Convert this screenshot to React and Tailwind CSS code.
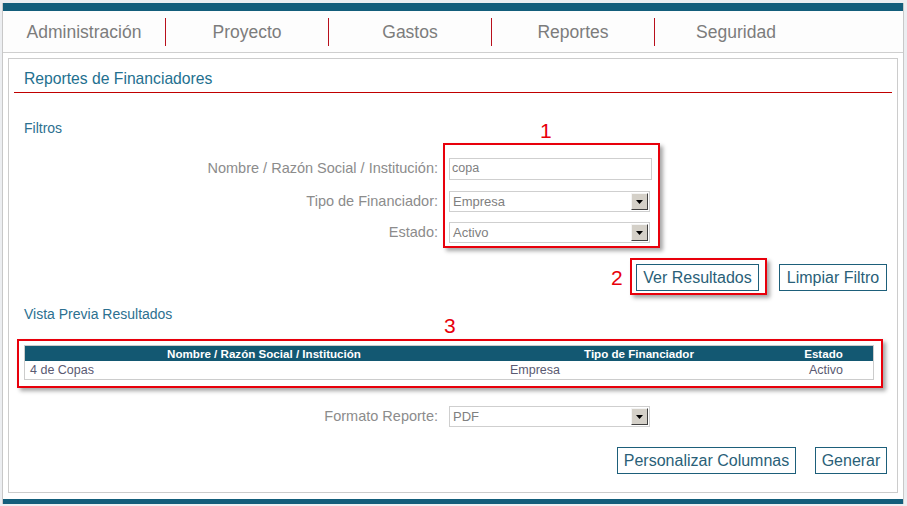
import React from "react";

const navItems = ["Administración", "Proyecto", "Gastos", "Reportes", "Seguridad"];

function Select({ value, width = "w-[201px]" }) {
  return (
    <div className={`${width} h-[21px] border border-[#cfcfcf] bg-white flex items-center justify-between pl-[3px] pr-[1px]`}>
      <span className="text-[13px] text-[#808080] leading-none">{value}</span>
      <div className="w-[17px] h-[17px] bg-[#d4d0c8] border-t border-l border-t-[#f4f4f4] border-l-[#f4f4f4] border-b border-r border-b-[#404040] border-r-[#404040] flex items-center justify-center">
        <svg width="7" height="4" viewBox="0 0 7 4"><path d="M0 0H7L3.5 4Z" fill="#000" /></svg>
      </div>
    </div>
  );
}

function Btn({ children, w }) {
  return (
    <div className={`${w} h-[27px] border border-[#1d5f7a] bg-white flex items-center justify-center text-[16px] text-[#2a5f78] leading-none`}>
      {children}
    </div>
  );
}

function Label({ children }) {
  return (
    <div className="w-[429px] text-right text-[14.5px] text-[#8c8c8c] leading-none">{children}</div>
  );
}

const annot = "absolute border-2 border-[#e8000b] shadow-[3px_3px_4px_rgba(0,0,0,0.35)]";
const num = "absolute text-[21px] leading-[21px] text-[#e8000b]";

export default function App() {
  return (
    <div className="w-[907px] h-[506px] bg-[#eceef1] font-['Liberation_Sans',Arial,sans-serif] overflow-hidden">
      <div className="ml-[2px] mt-[3px] w-[902px] h-[501px] border-x border-[#c8c8c8] bg-white flex flex-col">
        <div className="h-[8px] bg-[#135e7b]" />
        <div className="h-[42px] border-b border-[#cfcfcf] bg-[#fdfdfd] flex items-center pt-[1px]">
          {navItems.map((t, i) => (
            <React.Fragment key={t}>
              <div className="w-[162px] text-center text-[17.5px] text-[#7c7c7c] leading-none pt-[1px]">{t}</div>
              {i < 4 && <div className="w-px h-[28px] bg-[#b8101c]" />}
            </React.Fragment>
          ))}
        </div>
        <div className="relative mt-[5px] mx-[5px] h-[435px] border border-[#cccccc] bg-white flex flex-col">
          <div className="mx-[5px] pl-[10px] pt-[11px] pb-[4px] border-b border-[#c00000]">
            <div className="text-[15.7px] leading-[18px] text-[#23708f]">Reportes de Financiadores</div>
          </div>
          <div className="pl-[15px] mt-[27px] text-[14px] leading-[16px] text-[#2c7090]">Filtros</div>

          <div className="mt-[22px] flex flex-col">
            <div className="flex items-center h-[21px]">
              <Label>Nombre / Razón Social / Institución:</Label>
              <div className="ml-[11px] w-[203px] h-[22px] border border-[#cfcfcf] bg-white flex items-center pl-[2px]">
                <span className="text-[12.5px] text-[#808080] leading-none">copa</span>
              </div>
            </div>
            <div className="flex items-center h-[21px] mt-[12px]">
              <Label>Tipo de Financiador:</Label>
              <div className="ml-[11px]"><Select value="Empresa" /></div>
            </div>
            <div className="flex items-center h-[21px] mt-[10px]">
              <Label>Estado:</Label>
              <div className="ml-[11px]"><Select value="Activo" /></div>
            </div>
          </div>

          <div className="mt-[21px] flex justify-end pr-[10px] gap-[20px]">
            <Btn w="w-[123px]">Ver Resultados</Btn>
            <Btn w="w-[108px]">Limpiar Filtro</Btn>
          </div>

          <div className="pl-[15px] mt-[15px] text-[14px] leading-[16px] text-[#2c7090]">Vista Previa Resultados</div>

          <div className="ml-[15px] mt-[23px] w-[850px] border border-[#cccccc]">
            <div className="h-[15px] bg-[#135872] flex items-center text-[11.6px] font-bold text-white leading-none">
              <div className="w-[478px] text-center">Nombre / Razón Social / Institución</div>
              <div className="w-[272px] text-center">Tipo de Financiador</div>
              <div className="w-[97px] text-center">Estado</div>
            </div>
            <div className="h-[18px] flex items-center text-[12.5px] text-[#5a5a72] leading-none">
              <div className="w-[265px] pl-[5px]">4 de Copas</div>
              <div className="w-[490px] text-center">Empresa</div>
              <div className="w-[92px] text-center">Activo</div>
            </div>
          </div>

          <div className="mt-[26px] flex items-center h-[21px]">
            <Label>Formato Reporte:</Label>
            <div className="ml-[11px]"><Select value="PDF" /></div>
          </div>

          <div className="mt-[20px] flex justify-end pr-[10px] gap-[19px]">
            <Btn w="w-[179px]">Personalizar Columnas</Btn>
            <Btn w="w-[72px]">Generar</Btn>
          </div>

          <div className={`${annot} left-[434px] top-[84px] w-[217px] h-[105px]`} />
          <div className={`${num} left-[531px] top-[61px]`}>1</div>
          <div className={`${annot} left-[621px] top-[199px] w-[137px] h-[37px]`} />
          <div className={`${num} left-[602px] top-[208px]`}>2</div>
          <div className={`${annot} left-[8px] top-[280px] w-[866px] h-[49px]`} />
          <div className={`${num} left-[435px] top-[256px]`}>3</div>
        </div>
        <div className="mt-[6px] h-[5px] bg-[#135e7b]" />
      </div>
    </div>
  );
}
